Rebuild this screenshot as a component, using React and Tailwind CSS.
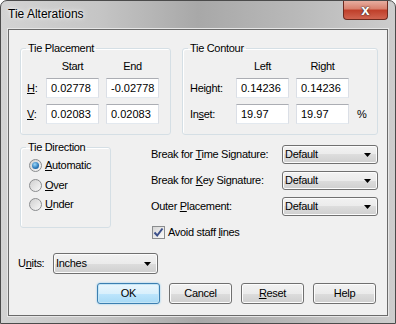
import React from 'react';

const btnFace = 'bg-[linear-gradient(#f2f2f2_0%,#ebebeb_50%,#dddddd_50%,#cfcfcf_100%)] border border-[#707070] rounded-[3px] shadow-[inset_0_0_0_1px_#fcfcfc]';

const U = ({ children }) => <span className="underline underline-offset-[1px]">{children}</span>;

const Field = ({ value }) => (
  <div className="w-[53px] h-[20px] bg-white border border-[#abadb3] border-b-[#e3e9ef] border-x-[#dbdfe6] pl-[4px] flex items-center text-[11px] tracking-normal">
    {value}
  </div>
);

const Combo = ({ value, w }) => (
  <div className={`${btnFace} ${w} flex items-center justify-between pl-[2px] pr-[6px]`}>
    <span>{value}</span>
    <svg width="7" height="4" viewBox="0 0 7 4"><path d="M0 0h7L3.5 4z" fill="#000" /></svg>
  </div>
);

const Radio = ({ label, checked }) => (
  <div className="h-[19.5px] flex items-center gap-[3px] pl-[8px]">
    <div className="w-[13px] h-[13px] rounded-full border border-[#8a8c8e] bg-[linear-gradient(135deg,#d0d0d0,#f8f8f8)] flex items-center justify-center">
      {checked && <div className="w-[7px] h-[7px] rounded-full bg-[radial-gradient(circle_at_40%_35%,#9bd8fa,#2a77b8_60%,#174f85)]" />}
    </div>
    <span>{label}</span>
  </div>
);

const Button = ({ children, def }) => (
  <button className={`w-[63px] h-[21px] flex items-center justify-center rounded-[3px] border ${def ? 'border-[#3c7fb1] bg-[linear-gradient(#eaf6fd_0%,#d9f0fc_50%,#bee6fd_50%,#a7d9f5_100%)] shadow-[inset_0_0_0_1px_#c4e5f6,0_0_2px_#7fc6f0]' : 'border-[#707070] bg-[linear-gradient(#f2f2f2_0%,#ebebeb_50%,#dddddd_50%,#cfcfcf_100%)] shadow-[inset_0_0_0_1px_#fcfcfc]'}`}>
    {children}
  </button>
);

export default function App() {
  return (
    <div className="w-[396px] h-[324px] flex flex-col rounded-t-[7px] border border-[#4b4b4b] bg-[linear-gradient(90deg,#d3d3d3_0%,#c5c5c5_25%,#a8a8a8_50%,#b9b9b9_75%,#cdcdcd_100%)] font-['Liberation_Sans',Arial,sans-serif] text-black overflow-hidden">
      {/* title bar */}
      <div className="h-[28px] flex justify-between shrink-0">
        <div className="pl-[7px] pt-[6px] text-[12px] leading-[15px] [text-shadow:0_0_6px_#fff,0_0_3px_#fff]">Tie Alterations</div>
        <div className="-mt-[1px] mr-[7px] w-[45px] h-[20px] rounded-b-[4px] border border-[#6d2a1f] border-t-0 bg-[linear-gradient(#e8b3a6_0%,#d9826f_45%,#c0402b_55%,#d06450_100%)] flex items-center justify-center">
          <span className="text-white font-bold text-[15px] leading-none [text-shadow:0_0_1px_#333,0_0_2px_#333]">x</span>
        </div>
      </div>

      {/* client */}
      <div className="flex-1 mx-[7px] mb-[7px] bg-[#f0f0f0] border border-[#6a6a6a] shadow-[0_0_0_1px_#e6e6e6] text-[11px] leading-[13px] tracking-[-0.3px] flex flex-col">
        <div className="flex pl-[11px] pt-[12px] gap-[11px]">
          <fieldset className="w-[151px] h-[93px] border border-[#d5dfe5] rounded-[3px] shadow-[inset_1px_1px_0_#fff]">
            <legend className="ml-[5px] px-[2px]">Tie Placement</legend>
            <div className="pl-[6px] pt-[5px]">
              <div className="flex pl-[19px] gap-[7px] mb-[5px]">
                <div className="w-[53px] text-center">Start</div>
                <div className="w-[53px] text-center">End</div>
              </div>
              <div className="grid grid-cols-[12px_53px_53px] gap-x-[7px] gap-y-[6px] items-center">
                <span><U>H</U>:</span>
                <Field value="0.02778" />
                <Field value="-0.02778" />
                <span><U>V</U>:</span>
                <Field value="0.02083" />
                <Field value="0.02083" />
              </div>
            </div>
          </fieldset>

          <fieldset className="w-[196px] h-[93px] border border-[#d5dfe5] rounded-[3px] shadow-[inset_1px_1px_0_#fff]">
            <legend className="ml-[5px] px-[2px]">Tie Contour</legend>
            <div className="pl-[7px] pt-[5px]">
              <div className="flex pl-[46px] gap-[7px] mb-[5px]">
                <div className="w-[53px] text-center">Left</div>
                <div className="w-[53px] text-center">Right</div>
              </div>
              <div className="grid grid-cols-[39px_53px_53px_14px] gap-x-[7px] gap-y-[6px] items-center">
                <span>Hei<U>g</U>ht:</span>
                <Field value="0.14236" />
                <Field value="0.14236" />
                <span />
                <span>In<U>s</U>et:</span>
                <Field value="19.97" />
                <Field value="19.97" />
                <span className="pl-[1px]">%</span>
              </div>
            </div>
          </fieldset>
        </div>

        <div className="flex items-start pl-[11px] mt-[6px]">
          <fieldset className="w-[91px] h-[87px] border border-[#d5dfe5] rounded-[3px] shadow-[inset_1px_1px_0_#fff]">
            <legend className="ml-[5px] px-[2px]">Tie Direction</legend>
            <div className="pt-[2px]">
              <Radio label={<><U>A</U>utomatic</>} checked />
              <Radio label={<><U>O</U>ver</>} />
              <Radio label={<><U>U</U>nder</>} />
            </div>
          </fieldset>

          <div className="ml-[40px] pt-[4px] flex flex-col gap-[7px]">
            <div className="flex items-center">
              <span className="w-[131px]">Break for <U>T</U>ime Signature:</span>
              <Combo value="Default" w="w-[96px] h-[19px]" />
            </div>
            <div className="flex items-center">
              <span className="w-[131px]">Break for <U>K</U>ey Signature:</span>
              <Combo value="Default" w="w-[96px] h-[19px]" />
            </div>
            <div className="flex items-center">
              <span className="w-[131px]">Outer <U>P</U>lacement:</span>
              <Combo value="Default" w="w-[96px] h-[19px]" />
            </div>
            <div className="flex items-center gap-[3px] pl-[1px] mt-[3px]">
              <div className="w-[13px] h-[13px] border border-[#8a8c8e] bg-[linear-gradient(135deg,#d6d6d6,#fafafa)] flex items-center justify-center">
                <svg width="11" height="11" viewBox="0 0 11 11"><path d="M1.5 5.5 L4.2 8.5 L9.5 1.5" fill="none" stroke="#3b4f8a" strokeWidth="2" /></svg>
              </div>
              <span>Avoid staff <U>l</U>ines</span>
            </div>
          </div>
        </div>

        <div className="flex items-center pl-[9px] mt-[14px] gap-[8px]">
          <span className="w-[27px]">U<U>n</U>its:</span>
          <Combo value="Inches" w="w-[105px] h-[21px]" />
        </div>

        <div className="flex justify-end gap-[9px] pr-[11px] mt-[9px]">
          <Button def>OK</Button>
          <Button>Cancel</Button>
          <Button><U>R</U>eset</Button>
          <Button>Help</Button>
        </div>
      </div>
    </div>
  );
}
